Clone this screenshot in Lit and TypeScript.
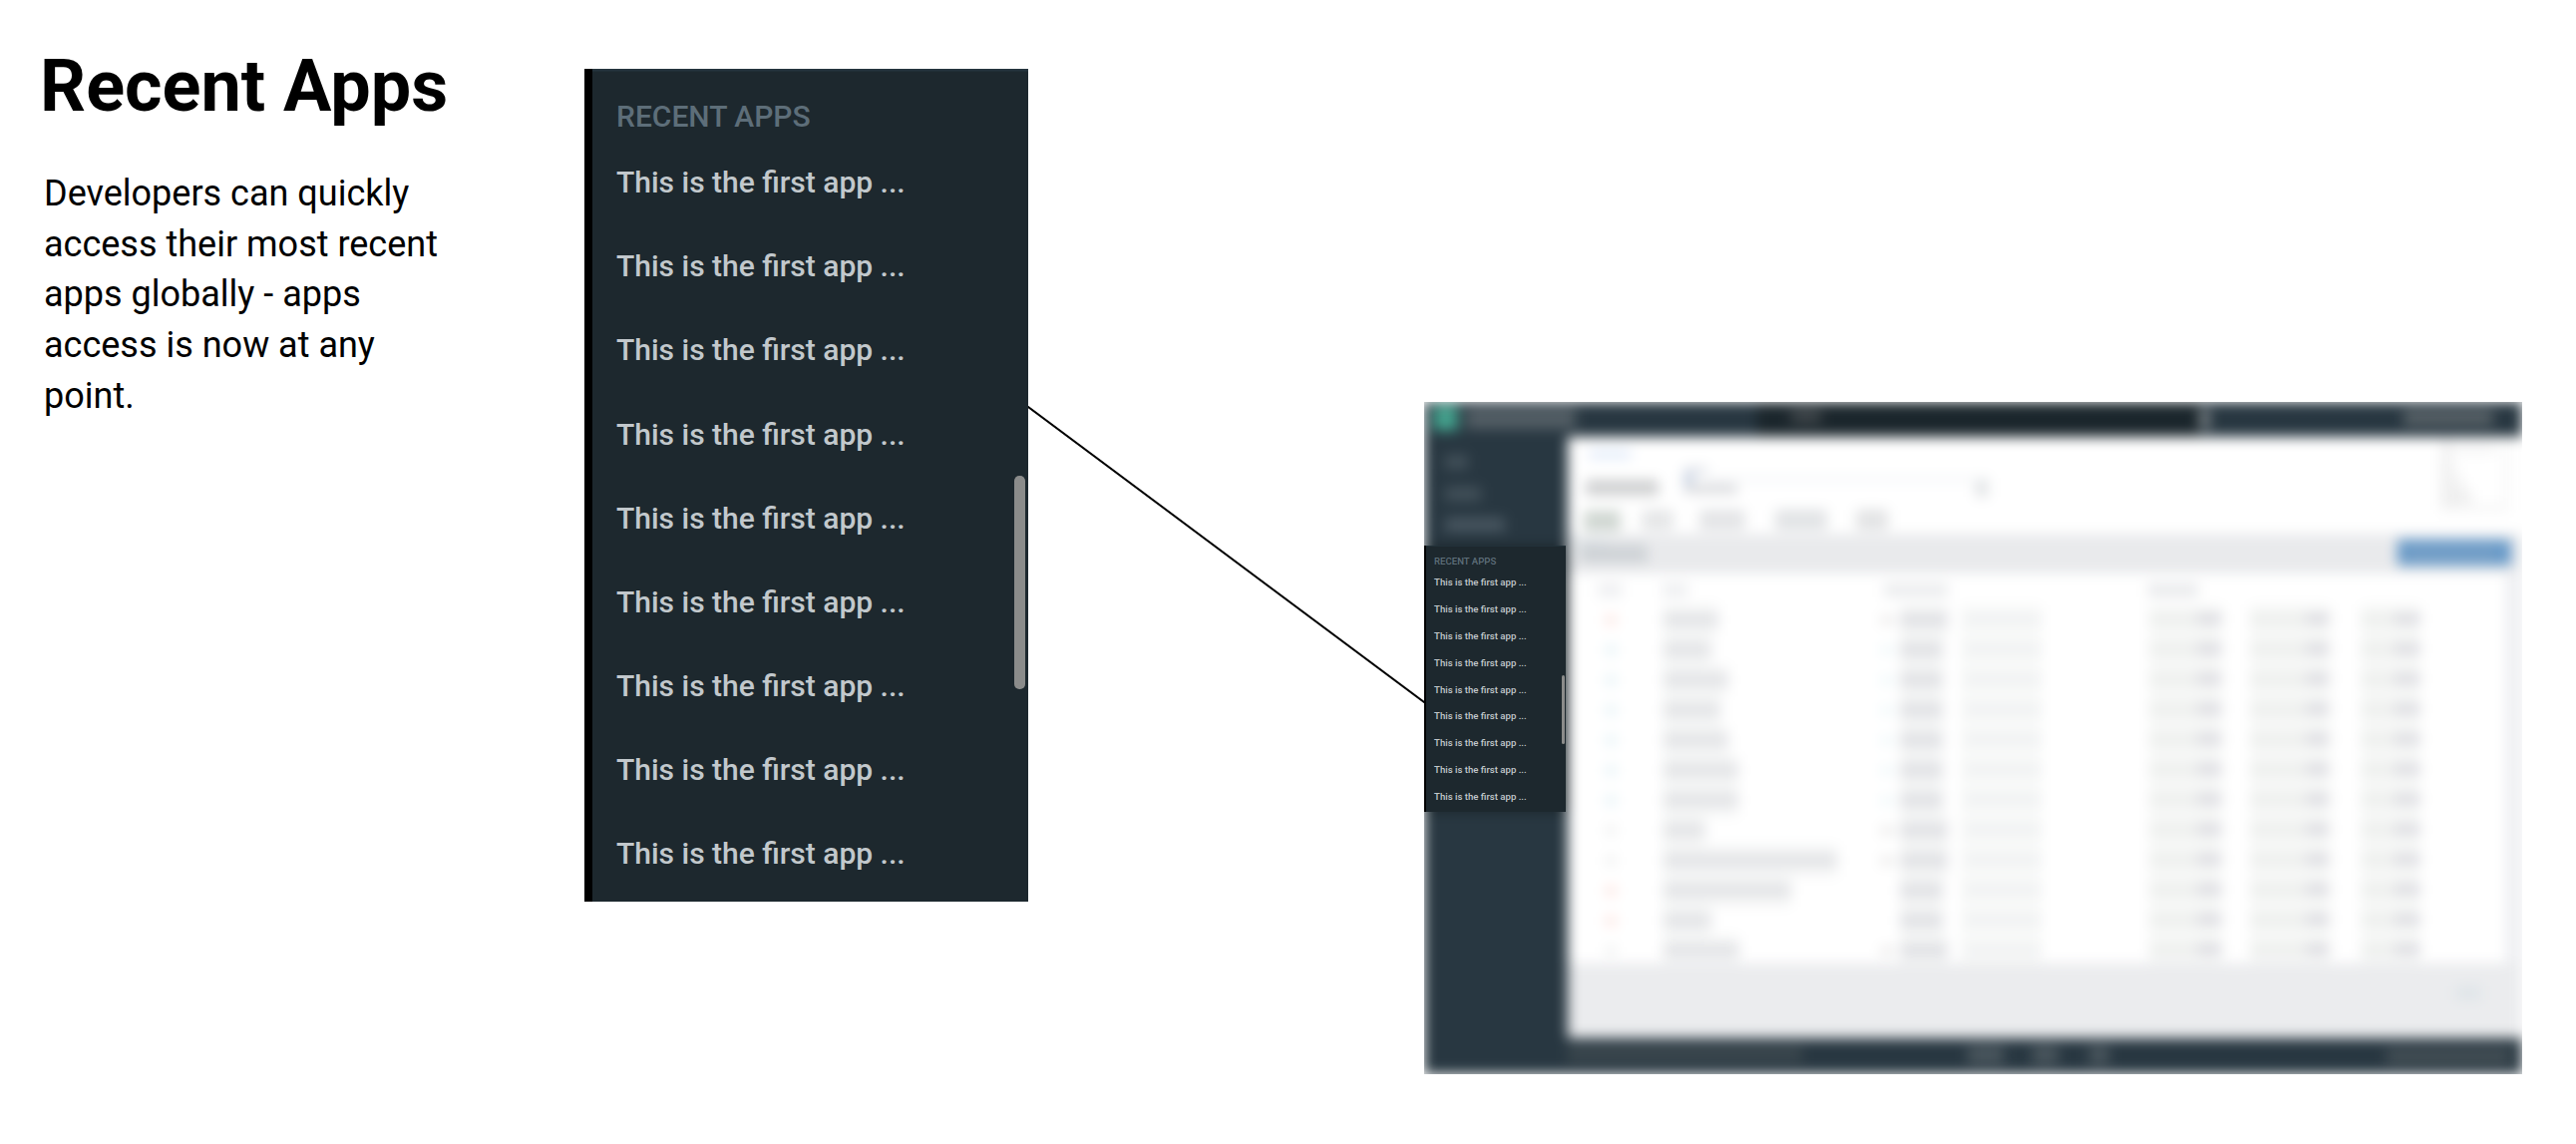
import { LitElement, html, css, svg } from "lit";
import { customElement } from "lit/decorators.js";

const APPS: string[] = Array(9).fill("This is the first app ...");

/** Recent apps list. Sized in em, so the host's font-size scales the whole panel. */
@customElement("recent-panel")
class RecentPanel extends LitElement {
  static styles = css`
    :host {
      display: block;
      box-sizing: border-box;
      position: relative;
      width: 14.8333em;
      height: 27.8333em;
      background: #1d282e;
      border-left: 0.2833em solid #000;
      box-shadow: inset 0 0.08em 0 #25343e;
      padding: 0.79em 0 0 0.8em;
      font-family: Roboto, "Liberation Sans", sans-serif;
      font-weight: 500;
      overflow: hidden;
      white-space: nowrap;
    }
    .heading {
      height: 1.6233em;
      line-height: 1.6233em;
      color: #5d6e79;
    }
    .item {
      height: 2.8017em;
      line-height: 2.8017em;
      color: #c2c8cc;
    }
    .thumb {
      position: absolute;
      right: 0.0933em;
      top: 13.5867em;
      width: 0.3667em;
      height: 7.1333em;
      border-radius: 0.17em;
      background: #8b8c8b;
    }
  `;
  render() {
    return html`
      <div class="heading">RECENT APPS</div>
      ${APPS.map((a) => html`<div class="item">${a}</div>`)}
      <div class="thumb"></div>
    `;
  }
}

/** x, y, width, height, fill */
type Bar = [number, number, number, number, string];

const NAMES = [55, 48, 65, 57, 65, 75, 75, 42, 174, 128, 48, 76];
const MARKS = ["r", "b", "b", "b", "b", "b", "b", "g", "g", "r", "r", "g"];
const MARK_COLORS: Record<string, string> = { r: "#fde3df", b: "#e2f1f6", g: "#eeefef" };
const WIDE = [0, 7, 8, 11];

const CHROME: Bar[] = [
  [0, 0, 1101, 35, "#283741"],
  [334, 0, 443, 35, "#1b262c"],
  [9, 3, 25, 26, "#43a08c"],
  [42, 6, 110, 21, "#535e65"],
  [368, 8, 30, 13, "#43494d"],
  [778, 7, 9, 20, "#878d90"],
  [982, 9, 90, 14, "#5d666b"],
  [0, 35, 144, 603, "#283741"],
  [0, 144, 144, 267, "#1b262c"],
  [21, 53, 23, 14, "#43515a"],
  [21, 85, 36, 14, "#43515a"],
  [21, 116, 60, 14, "#495761"],
  [0, 638, 1101, 36, "#283741"],
  [144, 647, 235, 14, "#3d494f"],
  [545, 647, 36, 16, "#4d5960"],
  [610, 647, 26, 16, "#4d5960"],
  [667, 647, 20, 16, "#4d5960"],
  [965, 649, 124, 14, "#465157"],
];

const CONTENT: Bar[] = [
  [144, 132, 957, 40, "#e9eaec"],
  [144, 563, 957, 75, "#ebecee"],
  [1085, 172, 16, 391, "#eeeff2"],
  [152, 140, 32, 5, "#d7e0e3"],
  [165, 49, 42, 7, "#dbe6f8"],
  [162, 78, 73, 16, "#cfd0d1"],
  [262, 65, 22, 8, "#e0e3e9"],
  [261, 70, 8, 20, "#becbe0"],
  [262, 82, 52, 10, "#dadbde"],
  [285, 76, 282, 3, "#edf0f3"],
  [553, 79, 12, 16, "#dfe2e4"],
  [160, 109, 37, 20, "#cfd6d1"],
  [218, 108, 32, 20, "#e5e6e7"],
  [276, 108, 46, 20, "#e3e4e6"],
  [352, 108, 52, 20, "#e1e3e5"],
  [433, 108, 32, 20, "#e2e3e4"],
  [156, 143, 68, 18, "#ced2d6"],
  [976, 138, 114, 26, "#6699c8"],
  [985, 150, 90, 4, "#91a9c2"],
  [1020, 38, 67, 70, "#efefef"],
  [1029, 38, 55, 66, "#ffffff"],
  [1029, 43, 46, 8, "#f3f3f3"],
  [1028, 62, 8, 10, "#f2f2f2"],
  [1028, 76, 14, 10, "#efefef"],
  [1028, 88, 22, 14, "#eeeeee"],
  [174, 182, 24, 14, "#eeeff1"],
  [239, 182, 26, 14, "#eeeff1"],
  [461, 182, 64, 14, "#ebecee"],
  [726, 182, 50, 14, "#e9eaec"],
  [1034, 586, 26, 14, "#dfe5e9"],
];

/** The blurred console screen behind the highlighted panel. */
@customElement("console-backdrop")
class ConsoleBackdrop extends LitElement {
  static styles = css`
    :host {
      display: block;
      width: 1101px;
      height: 674px;
      overflow: hidden;
      background: #fff;
    }
    .screen {
      display: block;
      width: 1101px;
      height: 674px;
      filter: blur(6.4px);
    }
  `;

  private bar([x, y, w, h, fill]: Bar) {
    return svg`<rect x=${x} y=${y} width=${w} height=${h} fill=${fill}></rect>`;
  }

  private row(i: number): Bar[] {
    const y = 215 + i * 30.1;
    const wide = WIDE.includes(i);
    const firm = i === 9 || i === 10;
    const bars: Bar[] = [
      [182, y - 1, 10, 10, MARK_COLORS[MARKS[i]]],
      [240, y - 11, NAMES[i], 30.2, "#f4f5f5"],
      [240, y - 2, NAMES[i], 11, "#e0e1e4"],
      [477, y - 11, wide ? 48 : 43, 30.2, "#f3f4f4"],
      [477, y - 2, wide ? 48 : 43, 11, "#dddee2"],
      [538, y - 11, 82, 30.2, "#f8f9f8"],
      [542, y, 76, 6, "#e9ebee"],
    ];
    if (!firm) bars.push([458, y, 12, 8, wide ? "#e8e6e5" : "#ecf7f9"]);
    for (const [x, w, d] of [[727, 73, 25], [828, 80, 24], [939, 60, 26]]) {
      bars.push([x, y - 11, w, 30.2, "#f6f7f6"]);
      bars.push([x, y - 1, w - d, 8, "#eaecea"]);
      bars.push([x + w - d, y - 3, d, 11, "#dcdce1"]);
    }
    return bars;
  }

  render() {
    const rows = NAMES.flatMap((_, i) => this.row(i));
    return html`
      <svg class="screen" viewBox="0 0 1101 674">
        <rect width="1101" height="674" fill="#fff"></rect>
        ${rows.map((b) => this.bar(b))}
        ${CONTENT.map((b) => this.bar(b))}
        ${CHROME.map((b) => this.bar(b))}
      </svg>
    `;
  }
}

@customElement("app-root")
class AppRoot extends LitElement {
  static styles = css`
    :host {
      display: block;
      font-family: Roboto, "Liberation Sans", sans-serif;
      color: #000;
      background: #fff;
    }
    .board {
      display: flex;
      align-items: flex-start;
      width: 2583px;
      height: 1147px;
      overflow: hidden;
    }
    .intro {
      box-sizing: border-box;
      flex: 0 0 586px;
      padding: 45px 130px 0 41px;
    }
    .title {
      margin: 0 -20px 0 -1px;
      font-size: 72px;
      line-height: 84px;
      font-weight: 700;
      white-space: nowrap;
    }
    .text {
      margin: 40px 0 0 3px;
      font-size: 36px;
      line-height: 50.7px;
    }
    .large {
      flex: none;
      margin-top: 69px;
      font-size: 30px;
    }
    .link {
      flex: none;
      display: block;
      width: 397px;
      height: 320px;
      margin-top: 396px;
    }
    .shot {
      flex: none;
      position: relative;
      margin-top: 403px;
    }
    .small {
      position: absolute;
      left: 0;
      top: 144px;
      font-size: 9.6px;
      padding-top: 0.88em;
      padding-left: 0.84em;
    }
  `;
  render() {
    return html`
      <main class="board">
        <section class="intro">
          <h1 class="title">Recent Apps</h1>
          <p class="text">
            Developers can quickly access their most recent apps globally - apps
            access is now at any point.
          </p>
        </section>
        <recent-panel class="large"></recent-panel>
        <svg class="link" viewBox="0 0 397 320">
          <line x1="-2" y1="10.5" x2="399" y2="309.5" stroke="#000" stroke-width="2"></line>
        </svg>
        <div class="shot">
          <console-backdrop></console-backdrop>
          <recent-panel class="small"></recent-panel>
        </div>
      </main>
    `;
  }
}
